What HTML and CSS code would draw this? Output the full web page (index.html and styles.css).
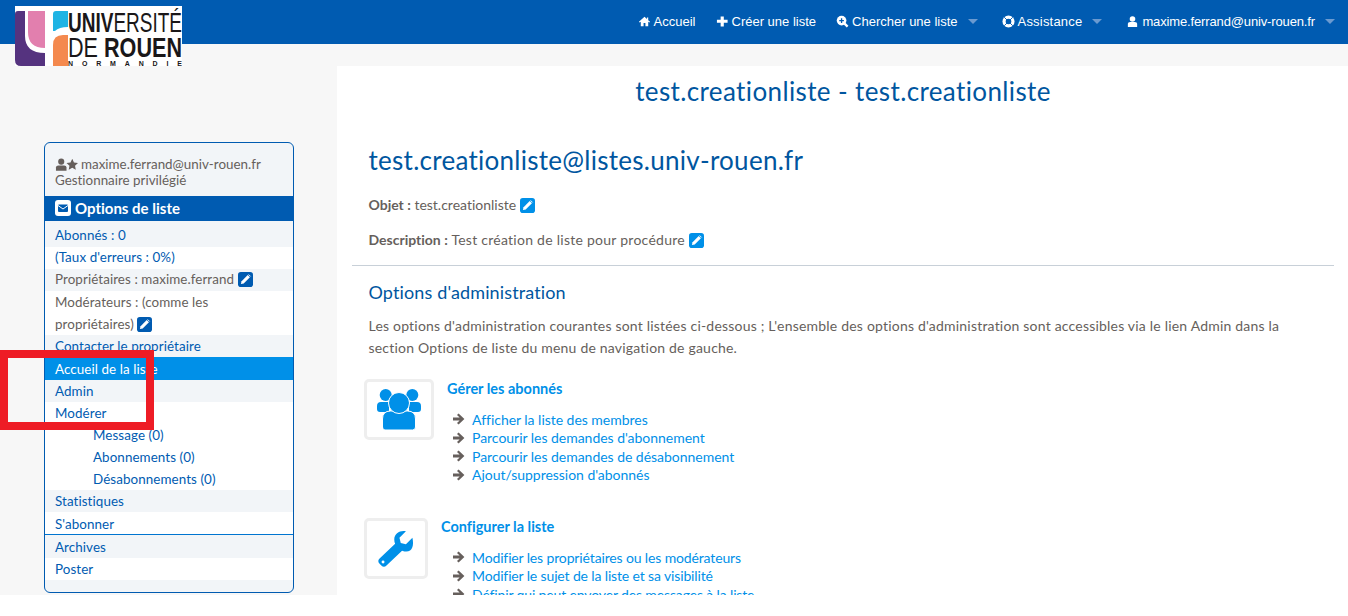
FILE: index.html
```html
<!DOCTYPE html>
<html lang="fr">
<head>
<meta charset="utf-8">
<title>test.creationliste</title>
<link rel="stylesheet" href="styles.css">
</head>
<body>
<svg class="defs" width="0" height="0" aria-hidden="true">
  <symbol id="pen" viewBox="0 0 16 16">
    <rect width="16" height="16" rx="3" fill="currentColor"/>
    <path d="M10.4 3.300l2.300 2.300-6.600 6.600-3 .7.7-3z" fill="#fff"/>
    <path d="M11.300 2.600l2.100 2.100" stroke="#fff" stroke-width="1"/>
  </symbol>
  <symbol id="arrow" viewBox="0 0 14 14">
    <path d="M1 5.600h6.600L5 3l1.600-1.600L12.400 7l-5.800 5.600L5 11l2.600-2.600H1z" fill="currentColor"/>
  </symbol>
</svg>
<div class="page">
  <header class="topbar">
    <div class="logo">
      <svg width="167" height="60" viewBox="0 0 167 60">
        <rect width="167" height="60" fill="#fff"/>
        <path d="M3 5H10V30Q10 47 30 47V60H6Q0 60 0 54V8Q0 5 3 5z" fill="#55337f"/>
        <path d="M13 5H30V42Q13 42 13 26z" fill="#e27fae"/>
        <path d="M38 25V8Q38 5 41 5H53V21Q44 21 40 25z" fill="#1fb4e4"/>
        <path d="M38 60V39Q38 29 48 29H53V60z" fill="#f4894e"/>
        <text class="logo-a" x="53" y="26" textLength="114" lengthAdjust="spacingAndGlyphs">UNIV<tspan class="logo-l">ERSITÉ</tspan></text>
        <text class="logo-a" x="53" y="51" textLength="114" lengthAdjust="spacingAndGlyphs"><tspan class="logo-l">DE </tspan>ROUEN</text>
        <text class="logo-c" x="53" y="60" textLength="114">NORMANDIE</text>
      </svg>
    </div>
    <nav class="nav">
      <a class="nav-item">
        <svg class="nav-ico" viewBox="0 0 14 14"><path d="M7 2L1 7.400l.8.8L3 7.200V12h3V8.600h2V12h3V7.200l1.200 1 .8-.8L11 5.600V2.600H9.600v1.700z" fill="currentColor"/></svg>
        Accueil
      </a>
      <a class="nav-item">
        <svg class="nav-ico" viewBox="0 0 14 14"><path d="M5 1.500h3.400V5h4.100v3.400H8.400V12.500H5V8.400H1V5h4z" fill="currentColor"/></svg>
        Créer une liste
      </a>
      <a class="nav-item has-caret">
        <svg class="nav-ico" viewBox="0 0 14 14"><circle cx="6" cy="6" r="5.200" fill="#fff"/><path d="M9 9l3.500 3.500" stroke="currentColor" stroke-width="2.600"/><path d="M3.500 6h5M6 3.500v5" stroke="#005bb1" stroke-width="1.400"/></svg>
        Chercher une liste
      </a>
      <a class="nav-item has-caret assist">
        <svg class="nav-ico" viewBox="0 0 14 14"><circle cx="7" cy="7" r="6.500" fill="#fff"/><circle cx="7" cy="7" r="3" fill="#005bb1"/><path d="M2.400 2.400l9.200 9.200M11.600 2.400l-9.200 9.200" stroke="#005bb1" stroke-width="1"/></svg>
        Assistance
      </a>
      <a class="nav-item has-caret email">
        <svg class="nav-ico" viewBox="0 0 14 14"><circle cx="7" cy="4.300" r="3" fill="currentColor"/><path d="M2 13V9.500Q2 7.500 4.500 7.500h5q2.500 0 2.500 2V13z" fill="currentColor"/></svg>
        maxime.ferrand@univ-rouen.fr
      </a>
    </nav>
  </header>

  <div class="columns">
    <aside class="side">
      <div class="card">
        <div class="user">
          <div class="user-line">
            <svg class="user-ico" viewBox="0 0 24 13"><circle cx="6.500" cy="3.500" r="3.200" fill="currentColor"/><path d="M1 13V9.500Q1 7.500 3.500 7.500h6q2.500 0 2.500 2V13z" fill="currentColor"/><path d="M18 0.500l1.800 3.900 4.200.5-3.100 2.900.8 4.200-3.700-2.100-3.700 2.100.8-4.200L12 4.900l4.200-.5z" fill="currentColor"/></svg>
            maxime.ferrand@univ-rouen.fr
          </div>
          <div>Gestionnaire privilégié</div>
        </div>
        <div class="card-title">
          <svg class="env" viewBox="0 0 16 16"><rect width="16" height="16" rx="3" fill="#fff"/><rect x="3" y="4.500" width="10" height="7.500" rx="1" fill="#005bb1"/><path d="M3 5.500l5 3.500 5-3.500" fill="none" stroke="#fff" stroke-width="1"/></svg>
          Options de liste
        </div>
        <ul class="rows">
          <li class="row alt up"><a class="lnk">Abonnés : 0</a></li>
          <li class="row up"><a class="lnk">(Taux d'erreurs : 0%)</a></li>
          <li class="row alt up">Propriétaires : maxime.ferrand <svg class="pen dark"><use href="#pen"/></svg></li>
          <li class="row">Modérateurs : (comme les propriétaires) <svg class="pen dark"><use href="#pen"/></svg></li>
          <li class="row alt"><a class="lnk">Contacter le propriétaire</a></li>
          <li class="row active">Accueil de la liste</li>
          <li class="row alt"><a class="lnk">Admin</a></li>
          <li class="row"><a class="lnk">Modérer</a></li>
          <li class="row sub"><a class="lnk">Message (0)</a></li>
          <li class="row sub"><a class="lnk">Abonnements (0)</a></li>
          <li class="row sub"><a class="lnk">Désabonnements (0)</a></li>
          <li class="row alt"><a class="lnk">Statistiques</a></li>
          <li class="row last-of-group"><a class="lnk">S'abonner</a></li>
          <li class="row alt low"><a class="lnk">Archives</a></li>
          <li class="row"><a class="lnk">Poster</a></li>
        </ul>
      </div>
    </aside>

    <main class="main">
      <h1 class="title">test.creationliste - test.creationliste</h1>
      <div class="inner">
        <h2 class="addr">test.creationliste@listes.univ-rouen.fr</h2>
        <p class="meta"><b>Objet :</b> test.creationliste <svg class="pen light"><use href="#pen"/></svg></p>
        <p class="meta"><b>Description :</b> <span class="spaced">Test création de liste pour procédure</span> <svg class="pen light"><use href="#pen"/></svg></p>
      </div>
      <hr class="rule">
      <div class="inner">
        <h3 class="section">Options d'administration</h3>
        <p class="intro">Les options d'administration courantes sont listées ci-dessous ; L'ensemble des options d'administration sont accessibles via le lien Admin dans la section Options de liste du menu de navigation de gauche.</p>
      </div>
      <section class="action first">
        <div class="box wide">
          <svg width="44" height="41" viewBox="0 0 44 41"><g fill="#0090e8"><circle cx="8.700" cy="6" r="6"/><circle cx="35.300" cy="6" r="6"/><path d="M0 20v-3q0-4 4-4h8v10H3q-3 0-3-3zM44 20v-3q0-4-4-4h-8v10h9q3 0 3-3z"/><path d="M5.500 41V30q0-8 8-8h17q8 0 8 8v8q0 3-3 3H8q-2.500 0-2.500-3z" stroke="#fff" stroke-width="1"/><circle cx="22" cy="14" r="10.500" stroke="#fff" stroke-width="1"/></g></svg>
        </div>
        <h4 class="act-title">Gérer les abonnés</h4>
        <ul class="act-list">
          <li><svg class="arr"><use href="#arrow"/></svg><a>Afficher la liste des membres</a></li>
          <li><svg class="arr"><use href="#arrow"/></svg><a>Parcourir les demandes d'abonnement</a></li>
          <li><svg class="arr"><use href="#arrow"/></svg><a>Parcourir les demandes de désabonnement</a></li>
          <li><svg class="arr"><use href="#arrow"/></svg><a>Ajout/suppression d'abonnés</a></li>
        </ul>
      </section>
      <section class="action second">
        <div class="box">
          <svg width="38" height="38" viewBox="0 0 44 44"><path d="M41 9l-7.500 7.500-6-1.500-1.500-6L33.500 1.500C27 0 20 4 20 11q0 3 1 5L3 33q-3 3 0 6l2 2q3 3 6 0l18-17q3 1 5 1c7 0 9-7 7-16z" fill="#0090e8"/><circle cx="7" cy="37" r="1.700" fill="#fff"/></svg>
        </div>
        <h4 class="act-title">Configurer la liste</h4>
        <ul class="act-list">
          <li><svg class="arr"><use href="#arrow"/></svg><a>Modifier les propriétaires ou les modérateurs</a></li>
          <li><svg class="arr"><use href="#arrow"/></svg><a>Modifier le sujet de la liste et sa visibilité</a></li>
          <li><svg class="arr"><use href="#arrow"/></svg><a>Définir qui peut envoyer des messages à la liste</a></li>
        </ul>
      </section>
    </main>
  </div>
  <div class="marker"></div>
</div>
</body>
</html>
```
FILE: styles.css
```css
* { box-sizing: border-box; }
html, body { margin: 0; padding: 0; background: #fff; }
body { font-family: "Lato", "Liberation Sans", sans-serif; font-size: 14px; color: #665f5c; font-variant-ligatures: none; }
.defs { position: absolute; }
ul { list-style: none; margin: 0; padding: 0; }
.page { position: relative; height: 595px; overflow: hidden; background: #f7f7f7; }

.topbar { height: 44px; background: #005bb1; display: flex; justify-content: flex-end; }
.logo { position: absolute; left: 15px; top: 6px; width: 167px; height: 60px; z-index: 2; }
.logo svg { display: block; }
.logo-a { font-family: "Liberation Sans", sans-serif; font-weight: 700; font-size: 28px; fill: #1a1718; }
.logo-l { font-weight: 400; }
.logo-c { font-family: "Liberation Sans", sans-serif; font-size: 7px; font-weight: 700; fill: #1a1718; }

.nav { display: flex; align-items: center; padding: 0 9px 2px 0; font-family: "Liberation Sans", sans-serif; font-size: 13px; color: #fff; }
.nav-item { display: flex; align-items: center; gap: 3px; margin-left: 20px; line-height: 1; white-space: nowrap; }
.nav-item.has-caret { margin-right: 4px; }
.nav-item.has-caret::after { content: ""; margin-left: 7px; border: 5px solid transparent; border-top-color: #6a9ad0; border-bottom-width: 0; }
.nav-item.assist { letter-spacing: .2px; }
.nav-item.email { letter-spacing: -.14px; }
.nav-ico { width: 13px; height: 13px; flex: none; }

.columns { display: flex; align-items: flex-start; }
.side { width: 337px; flex: none; padding: 98px 43px 0 44px; }
.card { border: 1px solid #005bb1; border-radius: 6px; background: #f2f5f8; height: 451px; overflow: hidden; line-height: 22px; font-size: 13.4px; }
.user { padding: 13px 10px 2px; line-height: 16px; height: 53px; }
.user-line { display: flex; align-items: center; gap: 3px; }
.user-ico { width: 23px; height: 13px; flex: none; }
.card-title { height: 25px; background: #005bb1; color: #fff; font-weight: 700; font-size: 15px; display: flex; align-items: center; gap: 4px; padding: 0 0 1px 10px; margin-bottom: 4px; }
.env { width: 16px; height: 16px; }
.rows { letter-spacing: .08px; }
.row { padding: 0 10px; background: #fff; min-height: 22px; }
.row.alt { background: #f2f5f8; }
.row.up { height: 22px; line-height: 20px; }
.row.active { background: #0090e8; color: #fff; height: 23px; line-height: 24px; }
.row.sub { padding-left: 48px; }
.row.last-of-group { border-bottom: 1px solid #0075d0; height: 23px; line-height: 24px; }
.row.low { height: 23px; line-height: 24px; }
.lnk { color: #005bb1; }
.pen { width: 15px; height: 15px; vertical-align: -3px; }
.pen.dark { color: #005bb1; }
.pen.light { color: #0090e8; }

.main { flex: 1; margin-top: 22px; min-height: 540px; background: #fff; padding: 0 14px 0 15px; }
.title { margin: 10px 0 0; font-size: 26px; line-height: 30px; font-weight: 400; text-align: center; color: #00569f; letter-spacing: .38px; }
.inner { padding: 0 16.5px; }
.addr { margin: 38px 0 0; font-size: 26px; line-height: 32px; font-weight: 400; color: #00569f; letter-spacing: .27px; }
.meta { margin: 0; font-size: 14px; line-height: 20px; }
.addr + .meta { margin-top: 19px; }
.meta + .meta { margin-top: 15px; }
.meta b { font-weight: 700; }
.spaced { letter-spacing: .26px; }
.rule { margin: 15px 0 0; border: 0; border-top: 1px solid #c8d0d8; }
.section { margin: 16px 0 0; font-size: 18px; line-height: 21px; font-weight: 400; color: #00569f; letter-spacing: .13px; }
.intro { margin: 12px 0 0; line-height: 22px; font-size: 14px; letter-spacing: .2px; }

.action { margin: 20px 0 0 12px; height: 139px; }
.action.second { margin-top: 0; }
.action.first .act-title { padding-top: 1px; }
.box { float: left; width: 64px; height: 61px; margin-right: 13px; border: 3px solid #eee; border-radius: 5px; display: flex; align-items: center; justify-content: center; background: #fff; }
.box.wide { width: 70px; }
.act-title { margin: 0; font-size: 14.5px; line-height: 18px; font-weight: 700; color: #0090e8; }
.act-list { margin: 12px 0 0 88px; }
.act-list li { display: flex; align-items: center; height: 18.5px; color: #0090e8; font-size: 14px; letter-spacing: -.03px; }
.action.second .act-list li { letter-spacing: -.14px; }
.arr { width: 14px; height: 14px; color: #665f5c; margin-right: 6px; flex: none; }

.marker { position: absolute; left: 0; top: 350px; width: 154px; height: 80px; border: 8px solid #ee1c25; }
```
